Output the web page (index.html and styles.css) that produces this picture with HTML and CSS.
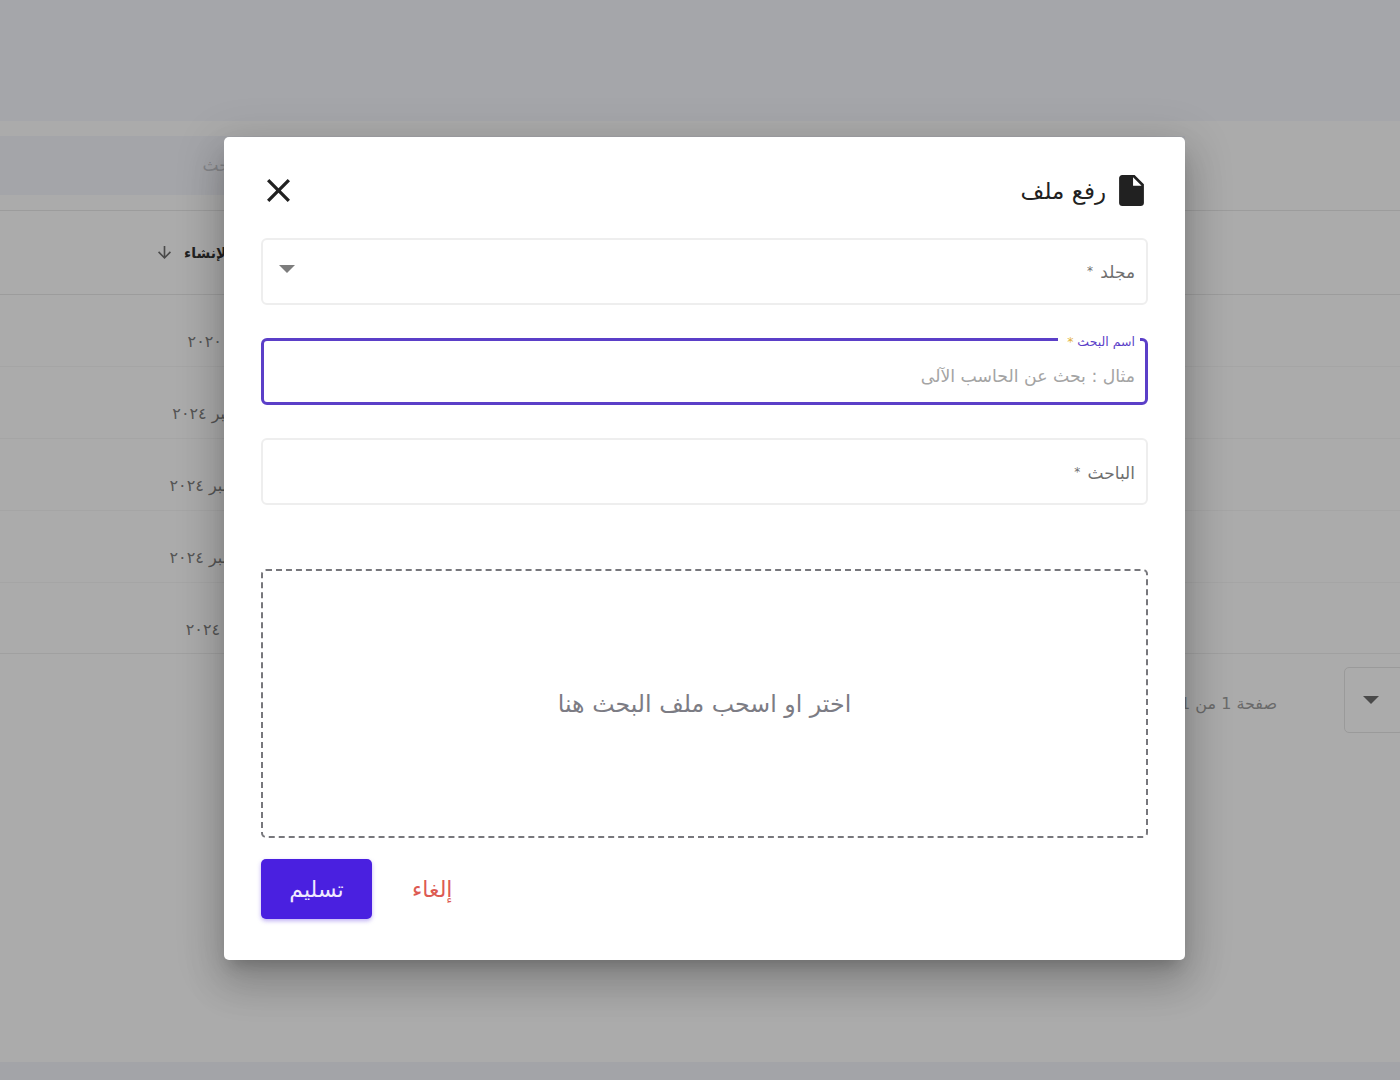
FILE: index.html
```html
<!DOCTYPE html>
<html lang="ar" dir="rtl">
<head>
  <meta charset="UTF-8">
  <title>رفع ملف</title>
  <link rel="stylesheet" href="styles.css">
</head>
<body>
<div class="page">
  <div class="topbar"></div>
  <div class="card">
    <div class="search"><span class="search-text">بحث</span></div>
    <div class="row head">
      <span class="cell">تاريخ الإنشاء</span>
      <svg class="arrow" viewBox="4 4 16 16"><path d="M20 12l-1.41-1.41L13 16.17V4h-2v12.17l-5.58-5.59L4 12l8 8 8-8z"/></svg>
    </div>
    <div class="row"><span class="cell">٢٧ يوليو ٢٠٢٠</span></div>
    <div class="row"><span class="cell">٢٧ سبتمبر ٢٠٢٤</span></div>
    <div class="row"><span class="cell">٢٧ ديسمبر ٢٠٢٤</span></div>
    <div class="row"><span class="cell">٢٧ ديسمبر ٢٠٢٤</span></div>
    <div class="row last"><span class="cell">٢٧ يناير. ٢٠٢٤</span></div>
    <div class="pager">
      <div class="pager-select"><span class="caret dark"></span></div>
      <span class="pager-text">صفحة 1 من 1</span>
    </div>
  </div>
  <div class="bottombar"></div>
</div>

<div class="modal">
  <div class="modal-head">
    <div class="modal-title">
      <svg class="file-icon" viewBox="4 2 16 20"><path d="M6 2c-1.1 0-2 .9-2 2v16c0 1.1.9 2 2 2h12c1.1 0 2-.9 2-2V8l-6-6H6zm7 7V3.5L18.5 9H13z"/></svg>
      <span>رفع ملف</span>
    </div>
    <svg class="close-icon" viewBox="5 5 14 14"><path d="M19 6.41 17.59 5 12 10.59 6.41 5 5 6.41 10.59 12 5 17.59 6.41 19 12 13.41 17.59 19 19 17.59 13.41 12z"/></svg>
  </div>

  <div class="field select-field">
    <span class="field-label">مجلد <span class="small-star">*</span></span>
    <span class="caret"></span>
  </div>

  <div class="field focused">
    <label class="float-label">اسم البحث <span class="star">*</span></label>
    <input class="field-input" placeholder="مثال : بحث عن الحاسب الآلى">
  </div>

  <div class="field third">
    <span class="field-label">الباحث <span class="small-star">*</span></span>
  </div>

  <div class="dropzone">اختر او اسحب ملف البحث هنا</div>

  <div class="actions">
    <button class="cancel">إلغاء</button>
    <button class="submit">تسليم</button>
  </div>
</div>
</body>
</html>
```

FILE: styles.css
```css
* {
  box-sizing: border-box;
  margin: 0;
  padding: 0;
  font-family: "DejaVu Sans", "Noto Sans", sans-serif;
}
html, body {
  height: 1080px;
  overflow: hidden;
}
body {
  background: #a5a6aa;
  position: relative;
}

/* page behind the dialog */
.page {
  display: flex;
  flex-direction: column;
  height: 1080px;
}
.topbar {
  height: 121px;
  background: #a5a6aa;
}
.card {
  flex: 1;
  background: #ababab;
  padding-top: 15px;
}
.bottombar {
  height: 18px;
  background: #a3a4a8;
}
.search {
  height: 59px;
  background: #a4a5a9;
  margin-bottom: 15px;
  margin-right: 215px;
  display: flex;
  align-items: center;
  padding-right: 950px;
}
.search-text {
  color: #85868a;
  font-size: 17px;
  margin-top: -2px;
}
.row {
  height: 72px;
  border-top: 1px solid #a5a5a5;
  display: flex;
  align-items: center;
  padding-top: 22px;
  padding-right: 1120px;
  white-space: nowrap;
  font-size: 16px;
  color: #555;
}
.row.head {
  height: 84px;
  padding-top: 0;
  padding-right: 1130px;
  border-top-color: #9c9c9c;
  font-weight: bold;
  font-size: 14px;
  color: #222;
}
.row.last {
  border-bottom: 1px solid #a0a0a0;
}
.row.head + .row {
  border-top-color: #9c9c9c;
}
.arrow {
  width: 13px;
  height: 13px;
  margin-right: 13px;
  fill: #4a4a4a;
}
.pager {
  display: flex;
  align-items: center;
  gap: 67px;
  padding-top: 13px;
}
.pager-select {
  width: 60px;
  height: 66px;
  margin-right: -4px;
  border: 1px solid #9a9a9a;
  border-radius: 5px;
  display: flex;
  align-items: center;
  padding-right: 24px;
}
.pager-text {
  font-size: 16px;
  color: #6a6a6a;
  margin-top: 6px;
}
.caret {
  width: 0;
  height: 0;
  border-left: 8px solid transparent;
  border-right: 8px solid transparent;
  border-top: 8px solid #7d7d7d;
}
.caret.dark {
  border-top-color: #4a4a4a;
}

/* dialog */
.modal {
  position: absolute;
  top: 137px;
  left: 224px;
  width: 961px;
  height: 823px;
  background: #fff;
  border-radius: 5px;
  box-shadow: 0 11px 15px -7px rgba(0,0,0,.2), 0 24px 38px 3px rgba(0,0,0,.14), 0 9px 46px 8px rgba(0,0,0,.12);
  padding: 38px 37px 0;
  display: flex;
  flex-direction: column;
}
.modal-head {
  display: flex;
  align-items: center;
  justify-content: space-between;
  height: 31px;
  margin-bottom: 32px;
  padding: 0 4px 0 6px;
}
.modal-title {
  display: flex;
  align-items: center;
  gap: 13px;
  font-size: 23px;
  color: #212121;
}
.file-icon {
  width: 25px;
  height: 31px;
  fill: #212121;
}
.close-icon {
  width: 23px;
  height: 23px;
  fill: #212121;
}
.field {
  position: relative;
  height: 67px;
  border: 2px solid #eeeeee;
  border-radius: 6px;
  margin-bottom: 33px;
  display: flex;
  align-items: center;
  justify-content: space-between;
  padding: 0 11px 0 16px;
}
.field-label {
  font-size: 17px;
  color: #6f6f6f;
  margin-top: 1px;
}
.third .field-label {
  margin-top: 2px;
}
.small-star {
  font-size: 12px;
  vertical-align: 3px;
  margin-right: 2px;
}
.select-field .caret {
  margin-top: -6px;
}
.field.focused {
  border: 3px solid #5b3fc8;
  padding-right: 10px;
}
.float-label {
  position: absolute;
  top: -5px;
  right: 5px;
  padding: 0 5px 0 9px;
  background: #fff;
  font-size: 12.5px;
  line-height: 12px;
  color: #5b3fc8;
}
.star {
  color: #e3b23c;
}
.field-input {
  width: 100%;
  border: 0;
  outline: 0;
  background: transparent;
  font-size: 17.3px;
  margin-top: 9px;
}
.field-input::placeholder {
  color: #a4a4a4;
  opacity: 1;
}
.dropzone {
  height: 269px;
  margin-top: 31px;
  border: 2px dashed #77777c;
  border-radius: 5px;
  display: flex;
  align-items: center;
  justify-content: center;
  font-size: 23.7px;
  color: #7c7c84;
}
.actions {
  display: flex;
  justify-content: flex-end;
  align-items: center;
  margin-top: 21px;
  gap: 40px;
}
.submit {
  width: 111px;
  height: 60px;
  border: 0;
  border-radius: 5px;
  background: #4a20e0;
  color: #efeaff;
  font-size: 22px;
  box-shadow: 0 2px 4px rgba(74,32,224,.35);
}
.cancel {
  border: 0;
  background: none;
  color: #dd5a52;
  font-size: 22px;
}
```
